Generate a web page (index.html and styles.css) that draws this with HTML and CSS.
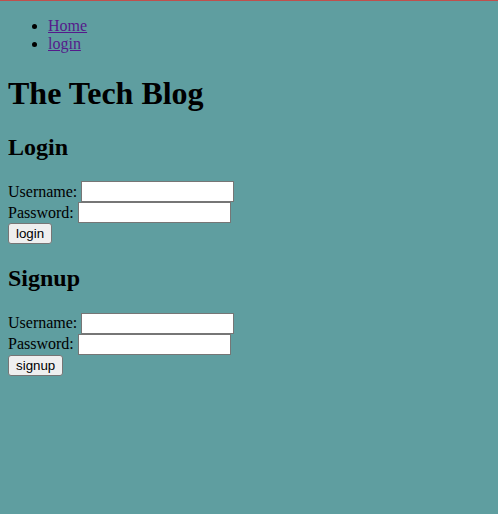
FILE: index.html
```html
<!DOCTYPE html>
<html>
<head>
<meta charset="utf-8">
<link rel="stylesheet" href="styles.css">
</head>
<body class="page">
<header class="site-header">
<ul class="nav">
<li><a href="#">Home</a></li>
<li><a href="#">login</a></li>
</ul>
<h1 class="title">The Tech Blog</h1>
</header>
<main>
<section>
<h2 class="heading">Login</h2>
<form class="form">
<label class="row">Username: <input class="field" type="text"></label>
<label class="row">Password: <input class="field" type="password"></label>
<div class="row row-btn"><button class="btn" type="button">login</button></div>
</form>
</section>
<section>
<h2 class="heading">Signup</h2>
<form class="form">
<label class="row">Username: <input class="field" type="text"></label>
<label class="row">Password: <input class="field" type="password"></label>
<div class="row row-btn"><button class="btn" type="button">signup</button></div>
</form>
</section>
</main>
</body>
</html>
```

FILE: styles.css
```css
html {
  background: #5f9ea0;
  border-top: 1px solid #c0504d;
}
.page {
  margin: 0 8px 8px;
  font-family: "Liberation Serif", "Times New Roman", serif;
  font-size: 16px;
  color: #000;
  background: #5f9ea0;
}
.nav {
  margin: 16px 0;
  padding-left: 40px;
}
.nav a {
  color: #551a8b;
}
.title {
  font-size: 32px;
  line-height: 38px;
  margin: 21px 0;
}
.heading {
  font-size: 24px;
  line-height: 28.4px;
  margin: 20px 0;
}
.form {
  margin: 0;
}
.row {
  display: flex;
  align-items: center;
  gap: 4px;
  height: 21px;
}
.row-btn {
  align-items: flex-start;
}
.field {
  width: 153px;
  height: 21px;
  box-sizing: border-box;
  border: 1px solid #767676;
  background: #fff;
  font-family: "Liberation Sans", Arial, sans-serif;
  font-size: 13.333px;
  padding: 1px 2px;
  margin: 0;
}
.btn {
  font-family: "Liberation Sans", Arial, sans-serif;
  font-size: 13.333px;
  padding: 1px 7px;
  border: 1px solid #767676;
  border-radius: 3px;
  background: #efefef;
  color: #000;
  height: 21px;
  margin: 0;
}
```
